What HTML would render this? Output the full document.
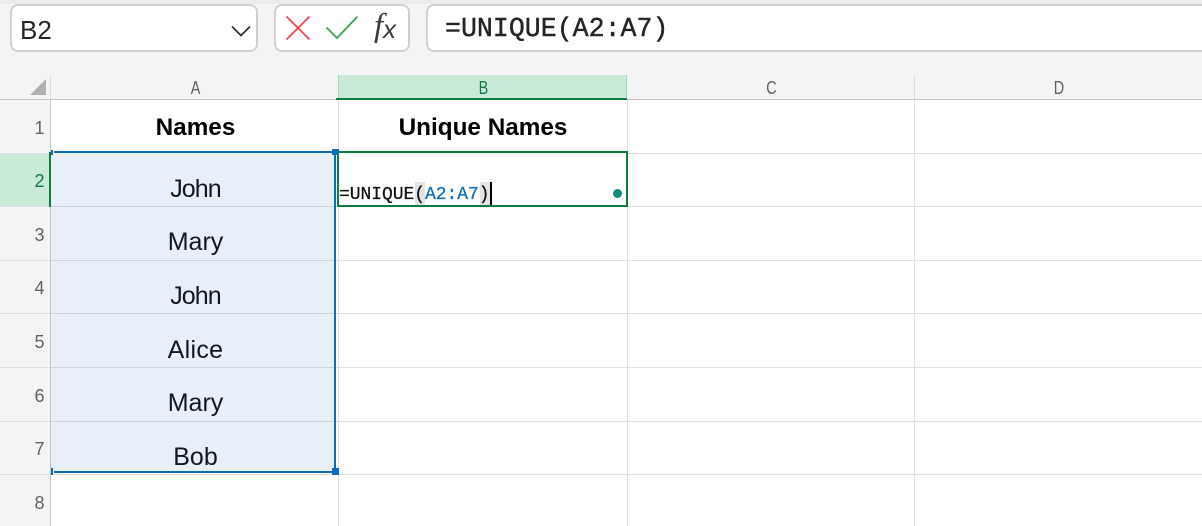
<!DOCTYPE html>
<html><head><meta charset="utf-8"><style>
html,body{margin:0;padding:0;background:#fff}
#p{position:relative;width:1202px;height:526px;overflow:hidden;background:#fff;font-family:"Liberation Sans",sans-serif}
#p div{position:absolute;box-sizing:border-box}
.t{white-space:nowrap;text-align:center;line-height:30px;height:30px}
.h{font-size:18px;color:#616161;top:78px;height:20px;line-height:20px;text-align:center;transform:scaleX(.8)}
.r{font-size:18px;color:#616161;left:0;width:44.500px;text-align:right;height:20px;line-height:20px}
.n{left:52px;width:287px;font-size:25px;color:#0f1720}
.hd{font-size:24.300px;font-weight:bold;color:#000;top:113px}
.gl{background:#e0e0e0}
.box{background:#fff;border:2px solid #d0d0d0;border-radius:8px}
</style></head><body><div id="p">
<div style="left:0;top:0;width:1202px;height:100px;background:#f4f4f4"></div>
<div style="left:0;top:100px;width:51px;height:426px;background:#f4f4f4"></div>
<div style="left:0;top:0;width:1202px;height:4px;background:#ececec"></div>

<div class="box" style="left:10px;top:4px;width:248px;height:48px"></div>
<div class="t" style="left:20px;top:15px;font-size:26px;color:#242424">B2</div>
<svg style="position:absolute;left:231px;top:24px" width="20" height="14"><path d="M1 2.500 L10 11.500 L19 2.500" fill="none" stroke="#333" stroke-width="1.700"/></svg>

<div class="box" style="left:274px;top:4px;width:136px;height:48px"></div>
<svg style="position:absolute;left:284px;top:14px" width="28" height="28"><path d="M2.500 2.500 L25.500 25.500 M25.500 2.500 L2.500 25.500" fill="none" stroke="#ef4a4a" stroke-width="1.800"/></svg>
<svg style="position:absolute;left:324px;top:14px" width="36" height="28"><path d="M2.500 13.500 L13 24 L33.500 2.500" fill="none" stroke="#45a358" stroke-width="1.900"/></svg>
<div style="left:374px;top:9px;font-family:'Liberation Serif',serif;font-style:italic;font-size:33px;color:#3a3a3a;line-height:34px;height:34px">f</div>
<div style="left:383px;top:15px;font-family:'Liberation Sans',sans-serif;font-style:italic;font-size:26px;color:#3a3a3a;line-height:28px;height:28px">x</div>

<div class="box" style="left:426px;top:4px;width:800px;height:48px"></div>
<div style="left:445px;top:13px;font-family:'Liberation Mono',monospace;font-size:26.600px;color:#242424;line-height:32px;height:32px;white-space:nowrap;-webkit-text-stroke:.4px #242424">=UNIQUE(A2:A7)</div>

<svg style="position:absolute;left:28px;top:78px" width="20" height="20"><path d="M2 17 L18 1 V17 Z" fill="#b0b0b0"/></svg>

<div style="left:338px;top:75px;width:289px;height:25px;background:#c9ead6"></div>
<div style="left:338px;top:75px;width:1px;height:25px;background:#9fd6b4"></div>
<div style="left:626px;top:75px;width:1px;height:25px;background:#9fd6b4"></div>
<div style="left:0;top:99px;width:1202px;height:1px;background:#c4c4c4"></div>
<div style="left:336px;top:98px;width:291px;height:2px;background:#107c41"></div>
<div style="left:50px;top:75px;width:1px;height:25px;background:#dcdcdc"></div>
<div style="left:914px;top:75px;width:1px;height:25px;background:#dcdcdc"></div>

<div class="h" style="left:52px;width:287px">A</div>
<div class="h" style="left:339px;width:289px;color:#107c41">B</div>
<div class="h" style="left:628px;width:287px">C</div>
<div class="h" style="left:915px;width:288px">D</div>

<div style="left:0;top:153px;width:50px;height:54px;background:#c9ead6;border-top:1px solid #a6dabb;border-bottom:1px solid #a6dabb"></div>

<div class="gl" style="left:0;top:153px;width:1202px;height:1px"></div>
<div class="gl" style="left:0;top:206px;width:1202px;height:1px"></div>
<div class="gl" style="left:0;top:260px;width:1202px;height:1px"></div>
<div class="gl" style="left:0;top:313px;width:1202px;height:1px"></div>
<div class="gl" style="left:0;top:367px;width:1202px;height:1px"></div>
<div class="gl" style="left:0;top:421px;width:1202px;height:1px"></div>
<div class="gl" style="left:0;top:474px;width:1202px;height:1px"></div>
<div class="gl" style="left:338px;top:100px;width:1px;height:426px"></div>
<div class="gl" style="left:627px;top:100px;width:1px;height:426px"></div>
<div class="gl" style="left:914px;top:100px;width:1px;height:426px"></div>
<div style="left:50px;top:100px;width:1px;height:426px;background:#c4c4c4"></div>

<div style="left:51px;top:153px;width:284px;height:318px;background:#e8eff9"></div>
<div style="left:51px;top:206px;width:284px;height:1px;background:#cdd3dc"></div>
<div style="left:51px;top:260px;width:284px;height:1px;background:#cdd3dc"></div>
<div style="left:51px;top:313px;width:284px;height:1px;background:#cdd3dc"></div>
<div style="left:51px;top:367px;width:284px;height:1px;background:#cdd3dc"></div>
<div style="left:51px;top:421px;width:284px;height:1px;background:#cdd3dc"></div>

<div style="left:54px;top:151px;width:279px;height:2px;background:#0f6cbd"></div>
<div style="left:54px;top:471px;width:279px;height:2px;background:#0f6cbd"></div>
<div style="left:334px;top:153px;width:2px;height:318px;background:#0f6cbd"></div>
<div style="left:51px;top:150px;width:2px;height:5px;background:#0f6cbd"></div>
<div style="left:51px;top:468px;width:2px;height:7px;background:#0f6cbd"></div>
<div style="left:49px;top:152px;width:2px;height:55px;background:#107c41"></div>
<div style="left:332px;top:468px;width:7px;height:7px;background:#0f6cbd"></div>

<div style="left:337px;top:151px;width:291px;height:56px;border:2px solid #107c41;background:#fff"></div>
<div style="left:332px;top:149px;width:7px;height:6px;background:#0f6cbd"></div>
<div style="left:337px;top:153px;width:2px;height:2px;background:#107c41"></div>

<div class="r" style="top:118px">1</div>
<div class="r" style="top:171px;color:#107c41">2</div>
<div class="r" style="top:225px">3</div>
<div class="r" style="top:278px">4</div>
<div class="r" style="top:332px">5</div>
<div class="r" style="top:386px">6</div>
<div class="r" style="top:439px">7</div>
<div class="r" style="top:493px">8</div>

<div class="t hd" style="left:52px;width:287px">Names</div>
<div class="t hd" style="left:339px;width:288px">Unique Names</div>

<div class="t n" style="top:174px;letter-spacing:-.9px">John</div>
<div class="t n" style="top:227px">Mary</div>
<div class="t n" style="top:281px;letter-spacing:-.9px">John</div>
<div class="t n" style="top:335px;letter-spacing:.3px">Alice</div>
<div class="t n" style="top:388px">Mary</div>
<div class="t n" style="top:442px">Bob</div>

<div style="left:415px;top:182px;width:10px;height:23px;background:#e4e4e4"></div>
<div style="left:480px;top:182px;width:10px;height:23px;background:#e4e4e4"></div>
<div style="left:339px;top:184px;height:22px;line-height:22px;font-family:'Liberation Mono',monospace;font-size:18px;color:#111;white-space:nowrap;letter-spacing:-.05px;-webkit-text-stroke:.25px">=UNIQUE(<span style="color:#0f6cbd">A2:A7</span>)</div>
<div style="left:490px;top:182px;width:2px;height:23px;background:#000"></div>
<div style="left:613px;top:189px;width:9px;height:9px;border-radius:50%;background:#11897a"></div>
</div></body></html>
